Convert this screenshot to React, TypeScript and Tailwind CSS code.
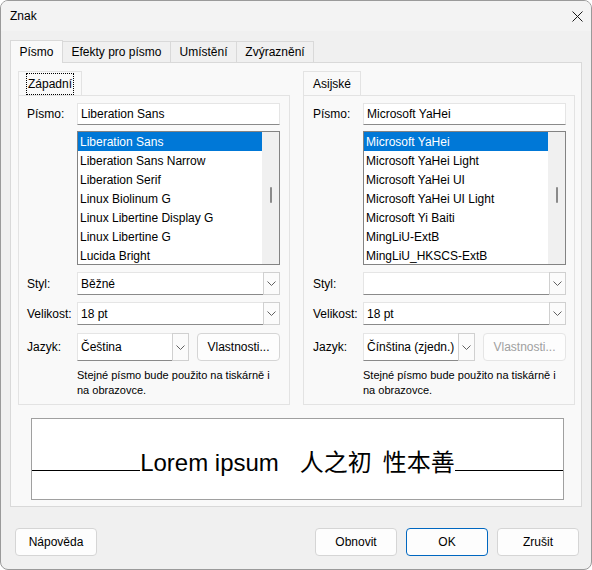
import React from 'react';

const westernFonts = [
  'Liberation Sans',
  'Liberation Sans Narrow',
  'Liberation Serif',
  'Linux Biolinum G',
  'Linux Libertine Display G',
  'Linux Libertine G',
  'Lucida Bright',
];

const asianFonts = [
  'Microsoft YaHei',
  'Microsoft YaHei Light',
  'Microsoft YaHei UI',
  'Microsoft YaHei UI Light',
  'Microsoft Yi Baiti',
  'MingLiU-ExtB',
  'MingLiU_HKSCS-ExtB',
];

function Chevron(): JSX.Element {
  return (
    <svg width="9" height="5" viewBox="0 0 9 5">
      <path d="M0.5 0.5 L4.5 4.5 L8.5 0.5" fill="none" stroke="#606060" strokeWidth="1" />
    </svg>
  );
}

function Combo({ value, className }: { value: string; className: string }): JSX.Element {
  return (
    <div className={`flex bg-white ${className}`}>
      <div className="flex flex-1 items-center border-t border-l border-b border-t-[#e5e5e5] border-l-[#e5e5e5] border-b-[#8a8a8a] pl-[3px]">
        {value}
      </div>
      <div className="flex w-[17px] items-center justify-center border border-[#d0d0d0] bg-[#fbfbfb]">
        <Chevron />
      </div>
    </div>
  );
}

function FontList({ items }: { items: string[] }): JSX.Element {
  return (
    <div className="flex h-[134px] w-[203px] overflow-hidden border border-[#838383] bg-white">
      <div className="flex-1">
        {items.map((name, i) => (
          <div
            key={name}
            className={`flex h-[19px] items-center pl-[2px] ${i === 0 ? 'bg-[#0078d7] text-white' : ''}`}
          >
            {name}
          </div>
        ))}
      </div>
      <div className="flex w-[17px] justify-center bg-[#f0f0f0] pt-[55px]">
        <div className="h-[16px] w-[2px] rounded-full bg-[#8a8a8a]" />
      </div>
    </div>
  );
}

function Button({
  label,
  className = '',
}: {
  label: string;
  className?: string;
}): JSX.Element {
  return (
    <div
      className={`flex items-center justify-center rounded-[4px] border bg-[#fdfdfd] ${className}`}
    >
      {label}
    </div>
  );
}

function FontGroup({
  tab,
  focused,
  font,
  items,
  style,
  lang,
  disabled,
  padLeft,
}: {
  tab: string;
  focused?: boolean;
  font: string;
  items: string[];
  style: string;
  lang: string;
  disabled?: boolean;
  padLeft: string;
}): JSX.Element {
  return (
    <div className="flex flex-col">
      <div className="flex h-[24px]">
        <div className="-mb-px flex items-center border border-b-0 border-[#e3e3e3] bg-[#f9f9f9] px-[8px]">
          <span className={focused ? 'outline-dotted outline-1 outline-black px-[1px] py-[1px]' : 'px-[1px]'}>
            {tab}
          </span>
        </div>
      </div>
      <div className={`flex h-[310px] flex-col border border-[#e3e3e3] bg-[#f9f9f9] pt-[7px] ${padLeft}`}>
        <div className="flex h-[22px] items-center">
          <div className="w-[50px]">Písmo:</div>
          <div className="flex h-[22px] w-[203px] items-center border border-[#e5e5e5] border-b-[#8a8a8a] bg-white pl-[3px]">
            {font}
          </div>
        </div>
        <div className="mt-[6px] ml-[50px]">
          <FontList items={items} />
        </div>
        <div className="mt-[7px] flex items-center">
          <div className="w-[50px]">Styl:</div>
          <Combo value={style} className="h-[23px] w-[203px]" />
        </div>
        <div className="mt-[7px] flex items-center">
          <div className="w-[50px]">Velikost:</div>
          <Combo value="18 pt" className="h-[23px] w-[203px]" />
        </div>
        <div className="mt-[8px] flex items-center">
          <div className="w-[50px]">Jazyk:</div>
          <Combo value={lang} className="h-[28px] w-[112px]" />
          <Button
            label="Vlastnosti..."
            className={`ml-[8px] h-[28px] w-[83px] ${
              disabled ? 'border-[#e5e5e5] bg-[#f9f9f9] text-[#a0a0a0]' : 'border-[#d5d5d5]'
            }`}
          />
        </div>
        <div className="mt-[7px] ml-[50px] whitespace-nowrap text-[11px] leading-[15px]">
          Stejné písmo bude použito na tiskárně i
          <br />
          na obrazovce.
        </div>
      </div>
    </div>
  );
}

const tabs = [
  { label: 'Písmo', w: 'w-[53px]' },
  { label: 'Efekty pro písmo', w: 'w-[108px]' },
  { label: 'Umístění', w: 'w-[66px]' },
  { label: 'Zvýraznění', w: 'w-[77px]' },
];

export default function App(): JSX.Element {
  return (
    <div className="flex h-[570px] w-[592px] flex-col overflow-hidden rounded-[8px] border border-[#9a9a9a] bg-[#f0f0f0] font-['Liberation_Sans',Arial,sans-serif] text-[12px] text-black">
      {/* title bar */}
      <div className="flex h-[30px] shrink-0 items-center justify-between bg-[#f3f3f3] pl-[9px] pr-[8px]">
        <span>Znak</span>
        <svg width="11" height="11" viewBox="0 0 11 11">
          <path d="M0.5 0.5 L10.5 10.5 M10.5 0.5 L0.5 10.5" stroke="#1a1a1a" strokeWidth="1" />
        </svg>
      </div>

      <div className="flex flex-col px-[9px] pt-[9px]">
        {/* tab strip */}
        <div className="relative z-10 flex h-[22px] items-end">
          {tabs.map((t, i) =>
            i === 0 ? (
              <div
                key={t.label}
                className={`-mb-px flex h-[23px] items-center justify-center border border-b-0 border-[#d9d9d9] bg-[#f9f9f9] ${t.w}`}
              >
                {t.label}
              </div>
            ) : (
              <div
                key={t.label}
                className={`flex h-[21px] items-center justify-center border border-l-0 border-b-0 border-[#d9d9d9] bg-[#f0f0f0] ${t.w}`}
              >
                {t.label}
              </div>
            )
          )}
        </div>

        {/* tab page */}
        <div className="flex h-[445px] flex-col border border-[#d9d9d9] bg-[#f9f9f9] pl-[7px] pt-[8px]">
          <div className="flex gap-[13px]">
            <div className="w-[272px]">
              <FontGroup
                tab="Západní"
                focused
                font="Liberation Sans"
                items={westernFonts}
                style="Běžné"
                lang="Čeština"
                padLeft="pl-[8px]"
              />
            </div>
            <div className="w-[272px]">
              <FontGroup
                tab="Asijské"
                font="Microsoft YaHei"
                items={asianFonts}
                style=""
                lang="Čínština (zjedn.)"
                disabled
                padLeft="pl-[9px]"
              />
            </div>
          </div>

          {/* preview */}
          <div className="mt-[13px] ml-[13px] flex h-[82px] w-[533px] items-center border border-[#a0a0a0] bg-white pt-[6px]">
            <div className="flex w-full items-baseline">
              <div className="h-px flex-1 bg-black" />
              <span className="text-[24px] leading-[28px]">Lorem ipsum</span>
              <span className="ml-[21px] font-['Noto_Sans_CJK_SC',sans-serif] text-[24px] leading-[28px]">
                人之初
              </span>
              <span className="ml-[11px] font-['Noto_Sans_CJK_SC',sans-serif] text-[24px] leading-[28px]">
                性本善
              </span>
              <div className="h-px flex-1 bg-black" />
            </div>
          </div>
        </div>
      </div>

      {/* dialog buttons */}
      <div className="mt-[21px] flex pl-[14px] pr-[12px]">
        <Button label="Nápověda" className="h-[28px] w-[82px] border-[#d5d5d5]" />
        <div className="flex-1" />
        <Button label="Obnovit" className="h-[28px] w-[82px] border-[#d5d5d5]" />
        <Button label="OK" className="ml-[9px] h-[28px] w-[82px] border-[#0067c0]" />
        <Button label="Zrušit" className="ml-[9px] h-[28px] w-[82px] border-[#d5d5d5]" />
      </div>
    </div>
  );
}
